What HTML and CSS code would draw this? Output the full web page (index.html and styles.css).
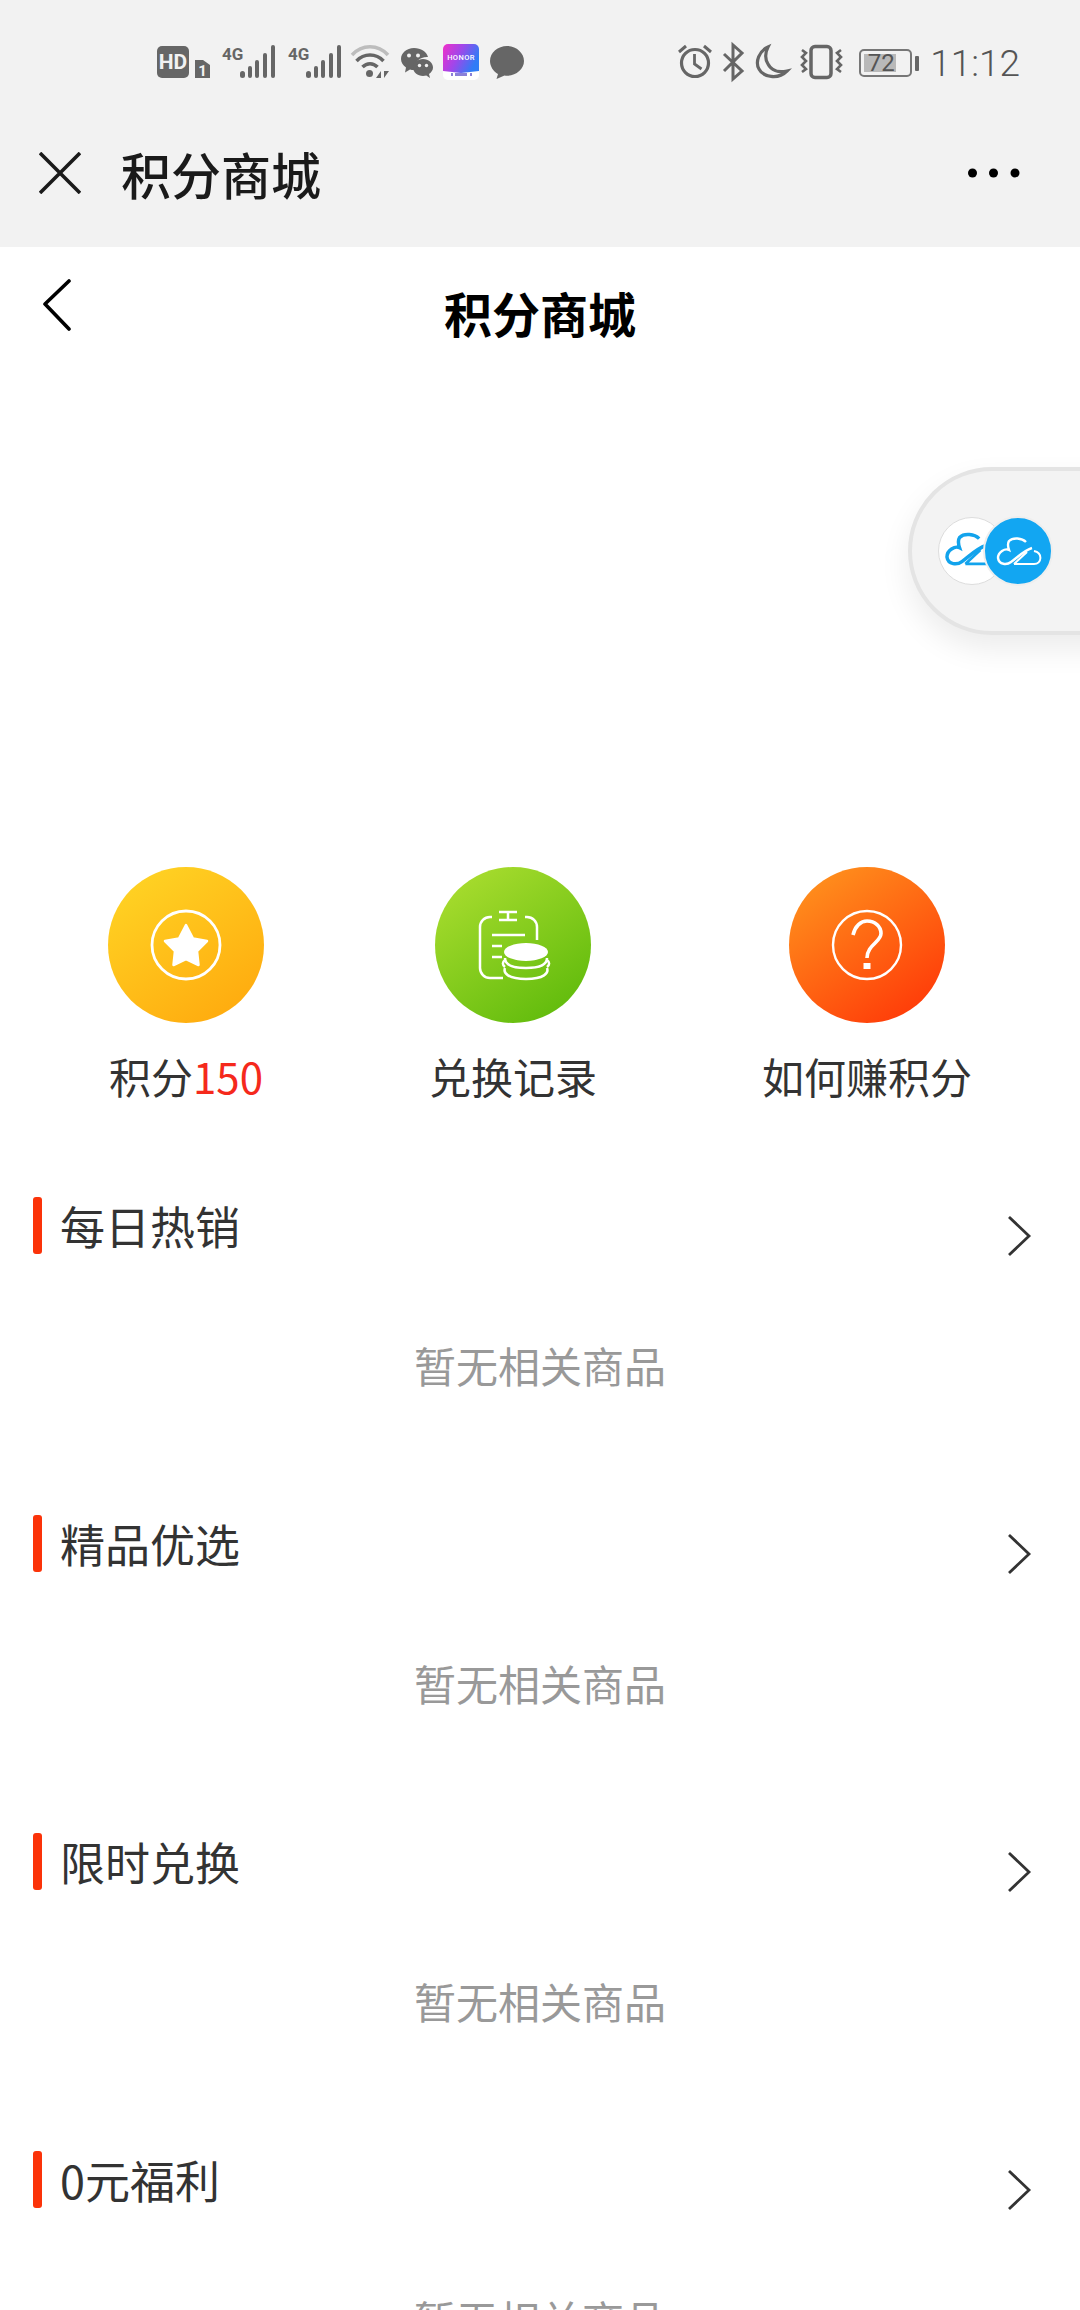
FILE: index.html
```html
<!DOCTYPE html>
<html lang="zh-CN">
<head>
<meta charset="utf-8">
<title>积分商城</title>
<link rel="stylesheet" href="styles.css">
</head>
<body>
<div class="page">
  <div class="statusbar">
    <div class="status-group left">
      <svg width="55" height="36" viewBox="0 0 55 36"><rect x="0" y="1" width="32" height="32" rx="5" fill="#666"/><text x="16" y="24" class="s-hd">HD</text><path d="M38 15h8l7 5v13h-15z" fill="#666"/><text x="45.500" y="31" class="s-one">1</text></svg>
      <svg width="56" height="36" viewBox="0 0 56 36"><text x="0" y="15" class="s-4g">4G</text><g fill="#666"><rect x="18" y="26" width="5" height="7" rx="2.500"/><rect x="26" y="21" width="4" height="12" rx="2"/><rect x="33" y="15" width="4" height="18" rx="2"/><rect x="41" y="8" width="4" height="25" rx="2"/><rect x="49" y="0" width="4" height="33" rx="2"/></g></svg>
      <svg width="52" height="36" viewBox="0 0 52 36" class="sig2"><text x="0" y="15" class="s-4g">4G</text><g fill="#666"><rect x="18" y="26" width="5" height="7" rx="2.500"/><rect x="26" y="21" width="4" height="12" rx="2"/><rect x="33" y="15" width="4" height="18" rx="2"/><rect x="41" y="8" width="4" height="25" rx="2"/><rect x="49" y="0" width="4" height="33" rx="2"/></g></svg>
      <svg width="40" height="36" viewBox="0 0 40 36"><path d="M2 10C12 -1 28 -1 38 10" fill="none" stroke="#bdbdbd" stroke-width="3.500"/><path d="M6.500 16C14 8 26 8 33.500 16" fill="none" stroke="#666" stroke-width="3.500"/><path d="M12.500 22C17 17.500 23 17.500 27.500 22" fill="none" stroke="#666" stroke-width="3.500"/><circle cx="19.500" cy="28.500" r="3.500" fill="#666"/><path d="M31 26v7h-5zM34 33v-7h5z" fill="#666"/></svg>
      <svg width="33" height="36" viewBox="0 0 33 36"><path d="M14 3C6.500 3 1 8 1 14c0 3.500 2 6.500 5 8.500l-1 5 5-3c1.500.4 3 .6 4.500.5C14 17 20 11.500 28 12 26.500 6.500 21 3 14 3z" fill="#666"/><circle cx="9" cy="10.500" r="2" fill="#f2f2f2"/><circle cx="18" cy="10.500" r="2" fill="#f2f2f2"/><path d="M23 14c-5.500 0-10 3.800-10 8.500S17.500 31 23 31c1.200 0 2.300-.2 3.300-.5l3.700 2.500-1-4c2.400-1.600 4-3.900 4-6.500C33 17.800 28.500 14 23 14z" fill="#666"/><circle cx="19.500" cy="20.500" r="1.700" fill="#f2f2f2"/><circle cx="26.500" cy="20.500" r="1.700" fill="#f2f2f2"/></svg>
      <svg width="37" height="36" viewBox="0 0 37 36"><defs><linearGradient id="honor" x1="0" y1="0" x2="1" y2="0.400"><stop offset="0" stop-color="#f22fc8"/><stop offset="0.500" stop-color="#a047ea"/><stop offset="1" stop-color="#2f7cf6"/></linearGradient></defs><rect x="0" y="-1" width="36" height="36" rx="5" fill="#fff"/><path d="M5 -1h26a5 5 0 0 1 5 5v22l-18 2-18-2v-22a5 5 0 0 1 5-5z" fill="url(#honor)"/><text x="18" y="15" class="s-honor">HONOR</text><path d="M8 29.500h2M12 29.500h12M27 29.500h2" stroke="#8a80d8" stroke-width="3"/></svg>
      <svg width="34" height="36" viewBox="0 0 34 36"><path d="M17 1C8 1 0 7.500 0 16c0 5.500 3.500 10.500 8 13l-1.500 5 8-3.500c1 .2 1.700.2 2.500.2 9 0 17-6.500 17-14.700S26 1 17 1z" fill="#666"/></svg>
    </div>
    <div class="status-group right">
      <svg width="34" height="36" viewBox="0 0 34 36"><circle cx="17" cy="18" r="13.500" fill="none" stroke="#666" stroke-width="3.200"/><path d="M16.500 9v10l7 5" fill="none" stroke="#666" stroke-width="2.800"/><path d="M1 7l7-6M33 7l-7-6" fill="none" stroke="#666" stroke-width="3"/></svg>
      <svg width="21" height="36" viewBox="0 0 21 36"><path d="M1 9l18 17-9 8V0l9 8L1 26" fill="none" stroke="#666" stroke-width="3"/></svg>
      <svg width="33" height="36" viewBox="0 0 33 36"><path d="M12 2C3 6-1 17 3 24c4 8 19 11 28 2-9 2-16-1-19-7C9 14 9 8 12 2z" fill="none" stroke="#666" stroke-width="3.200"/></svg>
      <svg width="46" height="36" viewBox="0 0 46 36"><rect x="11" y="1.500" width="20" height="31" rx="4" fill="none" stroke="#666" stroke-width="3.500"/><path d="M2 5l4 3-4 4 4 4-4 4 4 4-4 3M41 5l-4 3 4 4-4 4 4 4-4 4 4 3" fill="none" stroke="#666" stroke-width="2.600"/></svg>
      <div class="battery">
        <div class="battery-shell"><div class="battery-fill"></div><span class="battery-num">72</span></div>
        <div class="battery-nub"></div>
      </div>
      <span class="time">11:12</span>
    </div>
  </div>

  <div class="appbar">
    <svg class="app-close" width="42" height="42" viewBox="0 0 42 42"><path d="M1 1l40 40M41 1L1 41" fill="none" stroke="#1a1a1a" stroke-width="3.600"/></svg>
    <div class="app-title">积分商城</div>
    <svg class="app-more" width="52" height="10" viewBox="0 0 52 10"><circle cx="4.500" cy="5" r="4.500"/><circle cx="25.500" cy="5" r="4.500"/><circle cx="47" cy="5" r="4.500"/></svg>
  </div>

  <div class="nav">
    <svg class="nav-back" width="30" height="52" viewBox="0 0 30 52"><path d="M27 2L3 25l24 25" fill="none" stroke="#000" stroke-width="3.600" stroke-linecap="round" stroke-linejoin="round"/></svg>
    <div class="nav-title">积分商城</div>
  </div>

  <div class="float-pill">
    <div class="logo logo-white">
      <svg width="66" height="66" viewBox="0 0 66 66"><g transform="translate(-7 -7) scale(1.150)"><path d="M41 24C37 20 28 19 24 23C22 26 23 29 24 32C20 30 13 34 13 40C14 47 22 47 26 44C32 40 38 33 47 30" fill="none" stroke="#12a3ec" stroke-width="3"/><path d="M29 46H49M29 46L42 34" fill="none" stroke="#12a3ec" stroke-width="2.400"/></g></svg>
    </div>
    <div class="logo logo-blue">
      <svg width="66" height="66" viewBox="0 0 66 66"><path d="M41 24C37 20 28 19 24 23C22 26 23 29 24 32C20 30 13 34 13 40C14 47 22 47 26 44C32 40 38 33 47 30" fill="none" stroke="#fff" stroke-width="2.400"/><path d="M29 46H49C57 46 58 35 49 33M29 46L42 34" fill="none" stroke="#fff" stroke-width="2"/></svg>
    </div>
  </div>

  <div class="shortcuts">
    <div class="shortcut">
      <div class="disc disc-yellow">
        <svg width="156" height="156" viewBox="0 0 156 156"><circle cx="78" cy="78" r="34" fill="none" stroke="#fff" stroke-width="2.800"/><path d="M78 58l7 13.500 14 2.500-10 10 1.500 14-12.500-6-12.500 6 1.500-14-10-10 14-2.500z" fill="#fff" stroke="#fff" stroke-width="2.500" stroke-linejoin="round"/></svg>
      </div>
      <div class="shortcut-label">积分<span class="points">150</span></div>
    </div>
    <div class="shortcut">
      <div class="disc disc-green">
        <svg width="156" height="156" viewBox="0 0 156 156"><g fill="none" stroke="#fff" stroke-width="2.500"><path d="M57 50h-2a10 10 0 0 0-10 10v41a10 10 0 0 0 10 10h13M90 50h2a10 10 0 0 1 10 10v13M64 45h18M64 53h18M73 45v8M57 68h33M57 79h10M57 90h10"/><path d="M70 91c0 4 3 10 21 10s21-6 21-10"/><path d="M70 93a21 8 0 0 0 0 7M112 93a21 8 0 0 1 0 7"/><path d="M70 101c-2 5 3 11 21 11s23-6 21-11"/></g><ellipse cx="91" cy="85" rx="22" ry="9" fill="#fff"/></svg>
      </div>
      <div class="shortcut-label">兑换记录</div>
    </div>
    <div class="shortcut">
      <div class="disc disc-orange">
        <svg width="156" height="156" viewBox="0 0 156 156"><circle cx="78" cy="78" r="34" fill="none" stroke="#fff" stroke-width="2.400"/><path d="M64 68c2-9 8-14 14-14 8 0 14 5.500 14 12.500C92 75 78 78 78 91" fill="none" stroke="#fff" stroke-width="3.600"/><rect x="74.500" y="96" width="7" height="6" fill="#fff"/></svg>
      </div>
      <div class="shortcut-label">如何赚积分</div>
    </div>
  </div>

  <section class="section">
    <div class="section-head"><span class="section-bar"></span><h2 class="section-title">每日热销</h2><svg class="chevron" width="26" height="42" viewBox="0 0 26 42"><path d="M3 2l20 19L3 40" fill="none" stroke="#333" stroke-width="2.800"/></svg></div>
    <p class="empty">暂无相关商品</p>
  </section>
  <section class="section">
    <div class="section-head"><span class="section-bar"></span><h2 class="section-title">精品优选</h2><svg class="chevron" width="26" height="42" viewBox="0 0 26 42"><path d="M3 2l20 19L3 40" fill="none" stroke="#333" stroke-width="2.800"/></svg></div>
    <p class="empty">暂无相关商品</p>
  </section>
  <section class="section">
    <div class="section-head"><span class="section-bar"></span><h2 class="section-title">限时兑换</h2><svg class="chevron" width="26" height="42" viewBox="0 0 26 42"><path d="M3 2l20 19L3 40" fill="none" stroke="#333" stroke-width="2.800"/></svg></div>
    <p class="empty">暂无相关商品</p>
  </section>
  <section class="section">
    <div class="section-head"><span class="section-bar"></span><h2 class="section-title">0元福利</h2><svg class="chevron" width="26" height="42" viewBox="0 0 26 42"><path d="M3 2l20 19L3 40" fill="none" stroke="#333" stroke-width="2.800"/></svg></div>
    <p class="empty">暂无相关商品</p>
  </section>
</div>
</body>
</html>
```

FILE: styles.css
```css
* { box-sizing: border-box; }
html, body { margin: 0; padding: 0; background: #fff; }
body { width: 1080px; height: 2310px; overflow: hidden; }
.page {
  position: relative;
  width: 1080px;
  height: 2310px;
  overflow: hidden;
  font-family: "Noto Sans CJK SC", "Noto Sans", sans-serif;
  color: #333;
}

/* Status bar */
.statusbar {
  display: flex;
  justify-content: space-between;
  align-items: flex-start;
  height: 124px;
  padding: 45px 60px 0 157px;
  background: #f2f2f2;
}
.status-group { display: flex; align-items: flex-start; }
.status-group.left { gap: 10px; }
.status-group.right { gap: 11.5px; }
.status-group svg { display: block; overflow: visible; }
.s-hd { font: 700 21px "Roboto", sans-serif; fill: #f2f2f2; text-anchor: middle; }
.s-one { font: 700 15px "Roboto", sans-serif; fill: #f2f2f2; text-anchor: middle; }
.s-4g { font: 700 17px "Roboto", sans-serif; fill: #666; }
.s-honor { font: 500 7.500px "Roboto", sans-serif; fill: #fff; text-anchor: middle; letter-spacing: .4px; }
.battery { display: flex; align-items: center; width: 60px; height: 36px; margin-left: 1px; gap: 3px; }
.battery-shell {
  position: relative;
  width: 54px;
  height: 28px;
  padding: 3px;
  border: 2px solid #777;
  border-radius: 5px;
}
.battery-fill { width: 76%; height: 100%; background: #b9b9b9; }
.battery-num {
  position: absolute;
  left: 0;
  right: 8px;
  top: -5px;
  font: 400 24px/34px "Roboto", sans-serif;
  color: #555;
  text-align: center;
}
.battery-nub { width: 4px; height: 15px; background: #666; border-radius: 1px; }
.time {
  margin-top: 2px;
  font: 300 37px/34px "Roboto", sans-serif;
  color: #555;
}

/* WeChat-style app bar */
.appbar {
  display: flex;
  align-items: center;
  height: 123px;
  padding: 0 60px 25px 39px;
  background: #f2f2f2;
}
.app-close { flex: none; }
.app-title {
  margin-left: 40px;
  font-size: 50px;
  line-height: 66px;
  font-weight: 500;
  color: #1a1a1a;
}
.app-more { margin-left: auto; fill: #000; overflow: visible; }

/* Page header */
.nav {
  display: grid;
  grid-template-columns: 1fr auto 1fr;
  align-items: start;
  height: 620px;
  padding: 32px 0 0 42px;
}
.nav-back { display: block; }
.nav-title {
  margin-left: -42px;
  font-size: 48px;
  line-height: 66px;
  font-weight: 700;
  color: #000;
}

/* Floating pill */
.float-pill {
  position: absolute;
  left: 908px;
  top: 467px;
  display: flex;
  align-items: center;
  width: 300px;
  height: 168px;
  padding-left: 26px;
  background: #f3f3f3;
  border: 4px solid #e4e4e4;
  border-radius: 84px;
  box-shadow: 0 14px 30px rgba(0, 0, 0, .08);
}
.logo {
  display: flex;
  align-items: center;
  justify-content: center;
  flex: none;
  border-radius: 50%;
}
.logo-white { width: 68px; height: 68px; background: #fff; border: 1px solid #ddd; }
.logo-blue {
  position: relative;
  width: 70px;
  height: 70px;
  margin-left: -23px;
  background: #12a6f2;
  border: 2px solid #eee;
}

/* Shortcuts */
.shortcuts {
  display: flex;
  justify-content: space-between;
  padding: 0 108px;
}
.shortcut { display: flex; flex-direction: column; align-items: center; }
.disc { width: 156px; height: 156px; border-radius: 50%; }
.disc svg { display: block; }
.disc-yellow { background: linear-gradient(145deg, #ffd726, #ffa60c); }
.disc-green { background: linear-gradient(145deg, #b0e032, #58b708); }
.disc-orange { background: linear-gradient(145deg, #ff9a1f, #ff3006); }
.shortcut-label {
  margin-top: 23px;
  font-size: 42px;
  line-height: 60px;
  color: #333;
  white-space: nowrap;
}
.points { color: #f5291c; }

/* Sections */
.section { padding-bottom: 120px; }
.shortcuts + .section { margin-top: 91px; }
.section-head {
  display: flex;
  align-items: center;
  height: 57px;
  padding: 0 48px 0 33px;
}
.section-bar { flex: none; width: 9px; height: 57px; background: #fb3309; border-radius: 3px; }
.section-title {
  margin: 0 0 0 18px;
  font-size: 45px;
  line-height: 60px;
  font-weight: 400;
  color: #333;
}
.chevron { margin-left: auto; margin-bottom: -3px; align-self: flex-end; }
.empty {
  margin: 81px 0 0;
  font-size: 42px;
  line-height: 60px;
  color: #999;
  text-align: center;
}
```
